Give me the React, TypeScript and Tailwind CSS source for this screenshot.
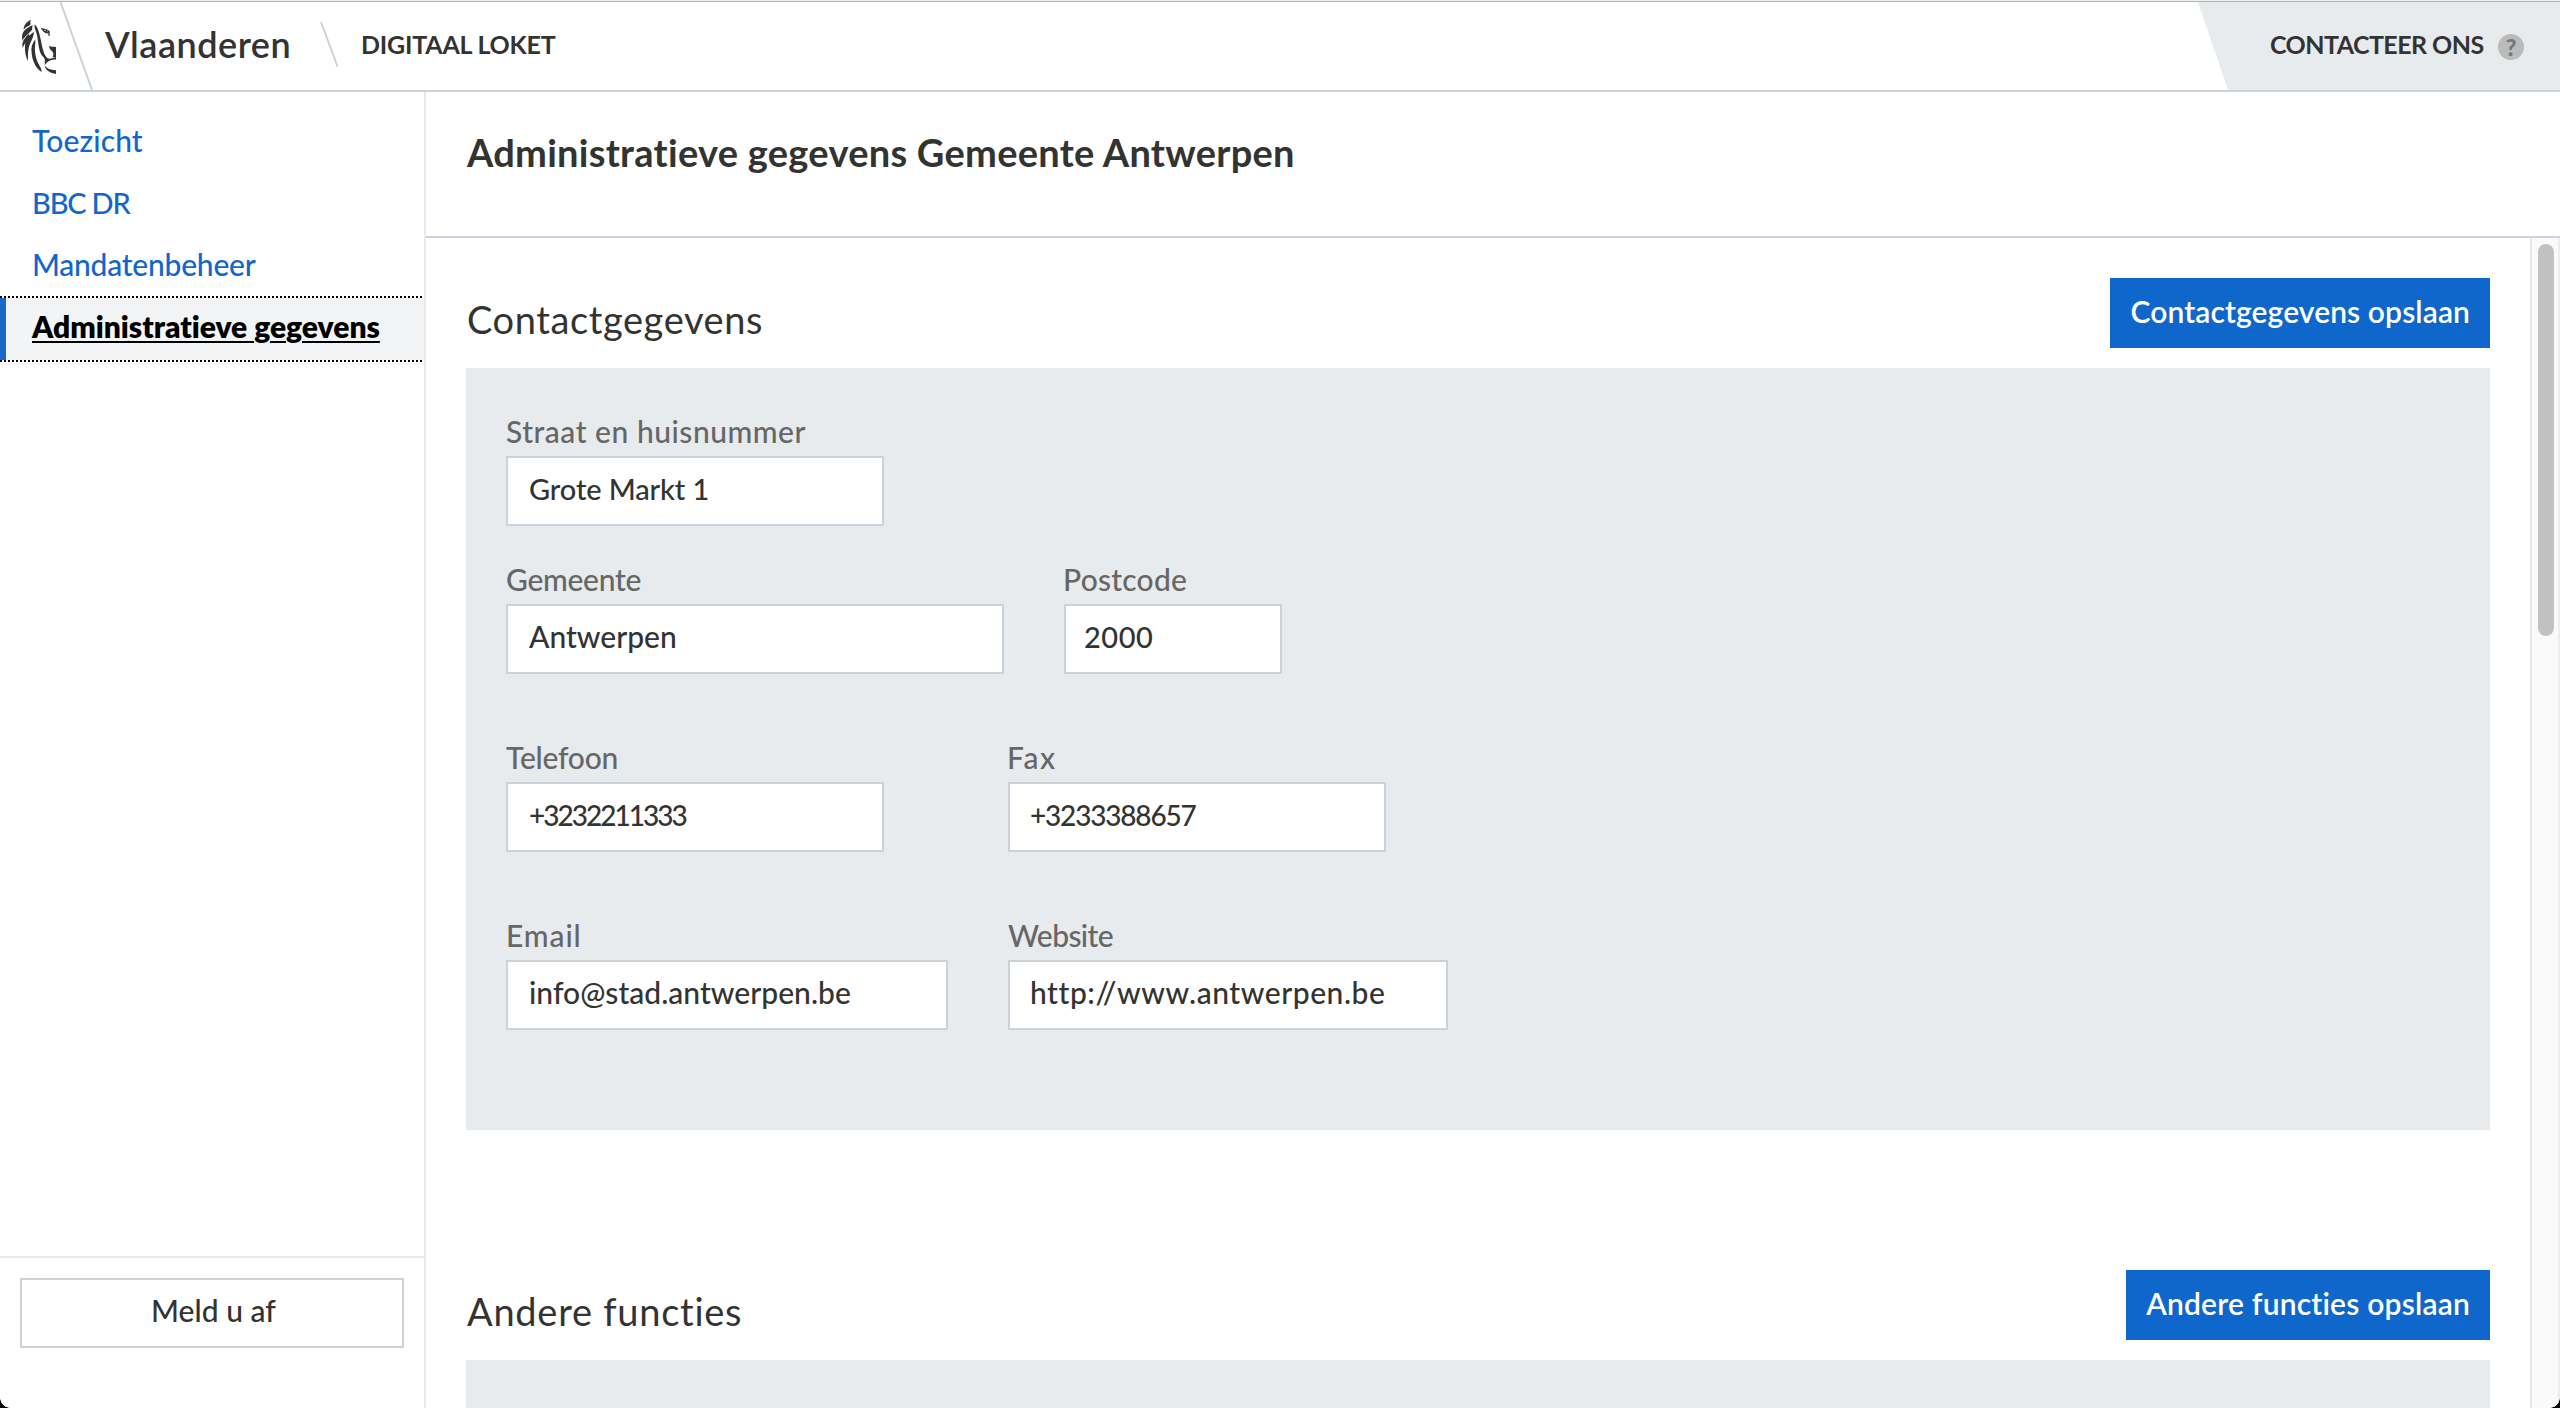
import type { ReactNode } from "react";

function LionLogo() {
  return (
    <svg viewBox="0 0 180 210" className="h-[70px] w-[60px] shrink-0" fill="#333332">
      <path d="M63 29 C50 35 41 45 41 59 C47 50 59 48 62 42 C60 38 61 33 63 29Z" />
      <path d="M68 45 C55 52 38 60 36 78 L37 93 C42 79 60 70 67 58 C66 54 67 50 68 45Z" />
      <path d="M72 66 C58 74 45 90 45 108 C44 126 48 142 54 154 C54 140 53 124 57 110 C61 96 70 86 72 66Z" />
      <path d="M56 72 C48 80 40 88 37 101 L38 114 C43 100 56 88 60 78Z" />
      <path d="M76 88 C66 100 62 114 65 130 C67 154 78 176 95 186 C95 180 92 172 89 168 C78 150 72 126 76 100Z" />
      <path d="M74 43 C72 56 80 66 82 80 C86 110 88 130 100 141 C106 146 105 156 104 166 L110 158 C118 152 128 148 138 149 L138 141 C130 143 122 148 113 145 C100 136 97 110 92 88 C88 70 84 52 74 43Z" />
      <path d="M117 107 C123 112 130 109 138 111 L138 141 L128 142 C132 134 131 126 123 121 C119 117 118 112 117 107Z" />
      <path d="M104 166 C108 174 120 180 138 181 L138 192 C122 190 106 182 104 166Z" />
      <path d="M92 54 C102 56 112 56 119 64 L119 78 L115 77 L115 70 C106 72 99 66 92 54Z" />
      <path d="M101 59 L107 60 L106 64 Z M111 61 L114 63 L113 66Z" fill="#fff" />
    </svg>
  );
}

function Header() {
  return (
    <header className="flex h-[90px] shrink-0 border-b-2 border-[#cbd2da] whitespace-nowrap text-[#333332]">
      <div className="flex h-[88px] w-[60px] items-start pt-2 pl-[10px]">
        <LionLogo />
      </div>
      <svg viewBox="0 0 34 88" className="h-[88px] w-[34px] shrink-0">
        <path d="M0.5 0 L32 88" stroke="#cbd2da" strokeWidth="2" />
      </svg>
      <div className="ml-[11px] w-[215px] text-[36px] leading-[84px] font-semibold tracking-[0.5px]">Vlaanderen</div>
      <svg viewBox="0 0 20 88" className="h-[88px] w-[20px] shrink-0">
        <path d="M1 20 L17.5 64.5" stroke="#cbd2da" strokeWidth="2" />
      </svg>
      <div className="ml-[21px] text-[25px] leading-[85px] font-bold tracking-[-0.2px]">DIGITAAL LOKET</div>
      <div className="ml-auto flex w-[362px] bg-[#e7ebed] pl-[72px] [clip-path:polygon(0_0,100%_0,100%_100%,30px_100%)]">
        <div className="w-[228px] text-[25px] leading-[85px] font-bold tracking-[-0.55px]">CONTACTEER ONS</div>
        <div className="mt-[32px] h-[26px] w-[26px] rounded-full bg-[#bbbbbb] text-center text-[23px] leading-[26px] font-black text-[#777777]">
          ?
        </div>
      </div>
    </header>
  );
}

function NavItem({ children }: { children: ReactNode }) {
  return <a className="block h-[62px] pl-[32px] leading-[61px] text-[#1266cb]">{children}</a>;
}

const dots =
  "h-[2px] w-[422px] bg-[repeating-linear-gradient(90deg,#000_0px,#000_2px,#fff_2px,#fff_4px)]";

function Sidebar() {
  return (
    <aside className="flex w-[426px] shrink-0 flex-col border-r-2 border-[#e6eaed]">
      <nav className="flex-1 pt-[18px] whitespace-nowrap">
        <NavItem><span className="tracking-[0.13px]">Toezicht</span></NavItem>
        <NavItem><span className="text-[29px] tracking-[-1.2px]">BBC DR</span></NavItem>
        <NavItem><span className="tracking-[-0.23px]">Mandatenbeheer</span></NavItem>
        <div className={dots} />
        <a className="block h-[62px] w-[424px] border-l-6 border-[#1b68c8] bg-[#f3f4f6] pl-[26px] leading-[57px] font-extrabold tracking-[-0.01px] text-black underline decoration-2 underline-offset-[3px]">
          Administratieve gegevens
        </a>
        <div className={dots} />
      </nav>
      <div className="h-[152px] border-t-2 border-[#e6eaed] px-5 pt-5">
        <button className="flex h-[70px] w-full justify-center border-2 border-[#cbd2da] pl-[3px] leading-[61px] tracking-[0.02px] text-[#333332]">
          Meld u af
        </button>
      </div>
    </aside>
  );
}

function SectionHead({ title, action }: { title: ReactNode; action: ReactNode }) {
  return (
    <div className="flex h-[90px] items-start justify-between">
      <h2 className="text-[38px] leading-[82px] font-normal">{title}</h2>
      <button className="h-[70px] bg-[#1067cb] px-5 pb-1 leading-[66px] font-semibold text-white">{action}</button>
    </div>
  );
}

function Field({ label, value, width }: { label: ReactNode; value: ReactNode; width: string }) {
  return (
    <div className={width}>
      <div className="h-[42px] leading-[34px] text-[#666666]">{label}</div>
      <div className="h-[70px] border-2 border-[#cbd2da] bg-white pl-[21px] leading-[61px] text-[#333332]">{value}</div>
    </div>
  );
}

function ContactForm() {
  return (
    <div className="h-[762px] bg-[#e7ebed] px-10 pt-[46px]">
      <div className="flex h-[148px]">
        <Field width="w-[378px]" label={<span className="tracking-[0.52px]">Straat en huisnummer</span>} value={<span className="text-[29px] tracking-[-0.11px]">Grote Markt 1</span>} />
      </div>
      <div className="flex h-[178px] gap-[60px]">
        <Field width="w-[498px]" label={<span className="tracking-[-0.29px]">Gemeente</span>} value={<span className="tracking-[0.01px]">Antwerpen</span>} />
        <Field width="w-[218px]" label={<span className="-ml-px tracking-[0.25px]">Postcode</span>} value={<span className="-ml-[3px] text-[29px] tracking-[0.51px]">2000</span>} />
      </div>
      <div className="flex h-[178px] gap-[124px]">
        <Field width="w-[378px]" label={<span className="tracking-[-0.24px]">Telefoon</span>} value={<span className="text-[28px] tracking-[-1.99px]">+3232211333</span>} />
        <Field width="w-[378px]" label={<span className="-ml-px tracking-[1.6px]">Fax</span>} value={<span className="-ml-px text-[28px] tracking-[-1.19px]">+3233388657</span>} />
      </div>
      <div className="flex gap-[60px]">
        <Field width="w-[442px]" label={<span className="tracking-[0.9px]">Email</span>} value={<span className="tracking-[0.03px]">info@stad.antwerpen.be</span>} />
        <Field width="w-[440px]" label={<span className="tracking-[-0.6px]">Website</span>} value={<span className="-ml-px tracking-[0.54px]">http://www.antwerpen.be</span>} />
      </div>
    </div>
  );
}

function Content() {
  return (
    <main className="flex min-w-0 flex-1 flex-col whitespace-nowrap text-[#333332]">
      <div className="h-[146px] border-b-2 border-[#cbd2dd] pl-[41px]">
        <h1 className="text-[38px] leading-[120px] font-bold tracking-[0.27px]">
          Administratieve gegevens Gemeente Antwerpen
        </h1>
      </div>
      <div className="flex min-h-0 flex-1">
        <div className="flex-1 overflow-hidden pt-10 pr-10 pl-10">
          <SectionHead
            title={<span className="ml-[1px] tracking-[0.59px]">Contactgegevens</span>}
            action={<span className="tracking-[0.1px]">Contactgegevens opslaan</span>}
          />
          <ContactForm />
          <div className="mt-[140px]">
            <SectionHead
              title={<span className="ml-[1px] tracking-[0.74px]">Andere functies</span>}
              action={<span className="tracking-[0.2px]">Andere functies opslaan</span>}
            />
            <div className="h-[48px] bg-[#e7ebed]" />
          </div>
        </div>
        <div className="w-[30px] border-x-2 border-l-[#e8e8e8] border-r-[#ededed] bg-[#fafafa] pt-[6px] pl-[6px]">
          <div className="h-[392px] w-4 rounded-full bg-[#c1c1c1]" />
        </div>
      </div>
    </main>
  );
}

export default function App() {
  return (
    <div className="relative flex h-[1408px] w-[2560px] flex-col overflow-hidden bg-white font-['Lato',sans-serif] text-[30px] font-medium">
      <div className="h-px shrink-0 bg-[#f0f0f0]" />
      <div className="h-px shrink-0 bg-[#b2b2b2]" />
      <Header />
      <div className="flex min-h-0 flex-1">
        <Sidebar />
        <Content />
      </div>
      <div className="absolute bottom-0 left-0 h-[10px] w-[10px] bg-[radial-gradient(circle_at_100%_0,transparent_9.5px,#000_10px)]" />
      <div className="absolute right-0 bottom-0 h-[10px] w-[10px] bg-[radial-gradient(circle_at_0_0,transparent_9.5px,#000_10px)]" />
    </div>
  );
}
